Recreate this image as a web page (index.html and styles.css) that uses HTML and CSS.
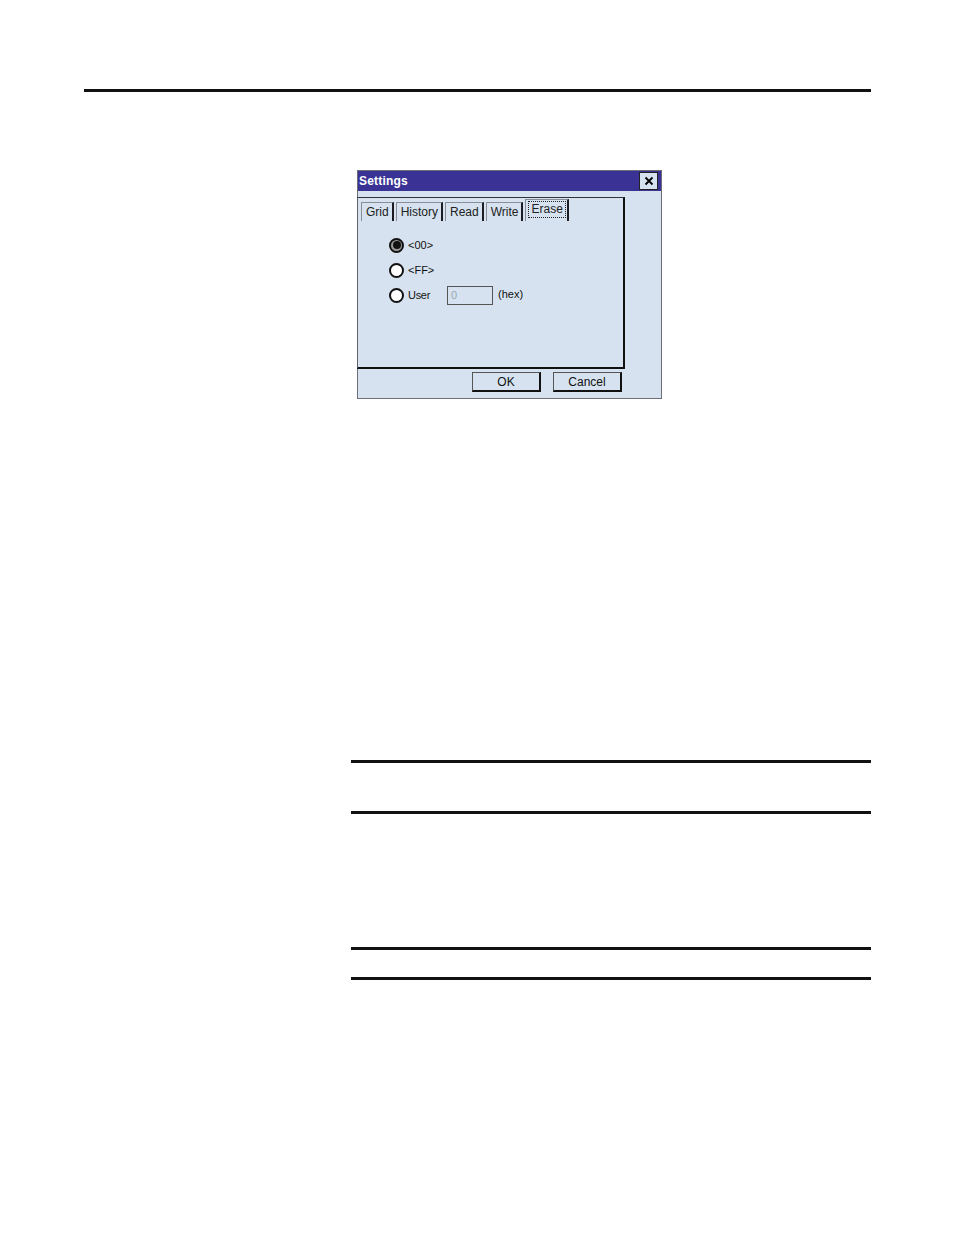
FILE: index.html
```html
<!DOCTYPE html>
<html>
<head>
<meta charset="utf-8">
<link rel="stylesheet" href="styles.css">
</head>
<body>
<div class="rule top-rule"></div>

<div class="dialog">
  <div class="titlebar">
    <span class="title">Settings</span>
    <span class="close">
      <svg width="10" height="10" viewBox="0 0 10 10"><path d="M1.5 1.5 L8.5 8.5 M8.5 1.5 L1.5 8.5" stroke="#000" stroke-width="1.8" fill="none"/></svg>
    </span>
  </div>
  <div class="dlg-body">
    <div class="panel">
      <div class="tabs">
        <span class="tab">Grid</span>
        <span class="tab">History</span>
        <span class="tab">Read</span>
        <span class="tab">Write</span>
        <span class="tab active"><span class="focus">Erase</span></span>
      </div>
      <div class="options">
        <div class="opt"><span class="radio checked"></span><span class="lbl">&lt;00&gt;</span></div>
        <div class="opt"><span class="radio"></span><span class="lbl">&lt;FF&gt;</span></div>
        <div class="opt"><span class="radio"></span><span class="lbl user">User</span><span class="input">0</span><span class="hex">(hex)</span></div>
      </div>
    </div>
    <div class="buttons">
      <span class="btn">OK</span>
      <span class="btn">Cancel</span>
    </div>
  </div>
</div>

<div class="rule sec-rule r1"></div>
<div class="rule sec-rule r2"></div>
<div class="rule sec-rule r3"></div>
<div class="rule sec-rule r4"></div>
</body>
</html>
```

FILE: styles.css
```css
html, body {
  margin: 0;
  padding: 0;
  background: #ffffff;
}
body {
  padding-top: 89px;
  font-family: "Liberation Sans", "DejaVu Sans", sans-serif;
}
.rule {
  height: 3px;
  background: #111111;
}
.top-rule {
  margin-left: 84px;
  width: 787px;
}
.sec-rule {
  margin-left: 351px;
  width: 520px;
}
.r1 { margin-top: 361px; }
.r2 { margin-top: 48px; }
.r3 { margin-top: 133px; }
.r4 { margin-top: 27px; }

.dialog {
  margin-top: 78px;
  margin-left: 357px;
  width: 303px;
  height: 227px;
  border: 1px solid #6e6e78;
  background: #d6e2ef;
  display: flex;
  flex-direction: column;
}
.titlebar {
  height: 20px;
  background: #3a3294;
  display: flex;
  align-items: center;
  justify-content: space-between;
  padding: 0 3px 0 1px;
}
.title {
  color: #ffffff;
  font-size: 12px;
  font-weight: bold;
  letter-spacing: 0.2px;
}
.close {
  width: 17px;
  height: 16px;
  background: #d6e2ef;
  border: 1px solid #222;
  display: flex;
  align-items: center;
  justify-content: center;
}
.dlg-body {
  padding-top: 6px;
  display: flex;
  flex-direction: column;
}
.panel {
  margin-left: -1px;
  width: 265px;
  height: 169px;
  border-left: 1px solid #60606a;
  border-top: 1px solid #33333a;
  border-right: 2px solid #111;
  border-bottom: 2px solid #111;
  display: flex;
  flex-direction: column;
}
.tabs {
  display: flex;
  align-items: flex-end;
  gap: 2px;
  padding: 1px 0 0 3px;
  height: 22px;
}
.tab {
  height: 18px;
  padding: 0 3px 0 4px;
  border-left: 1px solid #8a8d96;
  border-top: 1px solid #8a8d96;
  border-right: 2px solid #1c1c22;
  font-size: 12px;
  color: #222;
  display: flex;
  align-items: center;
}
.tab.active {
  height: 21px;
  padding: 0 1px 0 2px;
  align-items: flex-start;
}
.focus {
  border: 1px dotted #222;
  padding: 0 2px;
  line-height: 15px;
  margin-top: 1px;
}
.options {
  padding: 17px 0 0 31px;
  display: flex;
  flex-direction: column;
  gap: 11px;
}
.opt {
  display: flex;
  align-items: center;
  height: 14px;
  font-size: 11px;
  color: #111;
}
.radio {
  width: 11px;
  height: 11px;
  border: 2px solid #111;
  border-radius: 50%;
  background: #fff;
  flex: none;
  box-sizing: content-box;
  display: flex;
  align-items: center;
  justify-content: center;
}
.radio.checked {
  background: #9a9a9a;
}
.radio.checked::after {
  content: "";
  width: 8px;
  height: 8px;
  border-radius: 50%;
  background: #111;
}
.lbl {
  margin-left: 4px;
}
.user {
  width: 39px;
  letter-spacing: -0.3px;
}
.input {
  width: 41px;
  height: 17px;
  border: 1px solid #555;
  box-sizing: content-box;
  padding-left: 3px;
  color: #9aa8b4;
  font-size: 11px;
  line-height: 17px;
  margin-top: 1px;
}
.hex {
  margin-left: 5px;
  margin-top: -3px;
}
.buttons {
  display: flex;
  justify-content: flex-end;
  gap: 12px;
  padding-right: 39px;
  margin-top: 3px;
}
.btn {
  width: 66px;
  height: 17px;
  border-left: 1px solid #555;
  border-top: 1px solid #555;
  border-right: 2px solid #111;
  border-bottom: 2px solid #111;
  font-size: 12px;
  color: #111;
  display: flex;
  align-items: center;
  justify-content: center;
}
```
